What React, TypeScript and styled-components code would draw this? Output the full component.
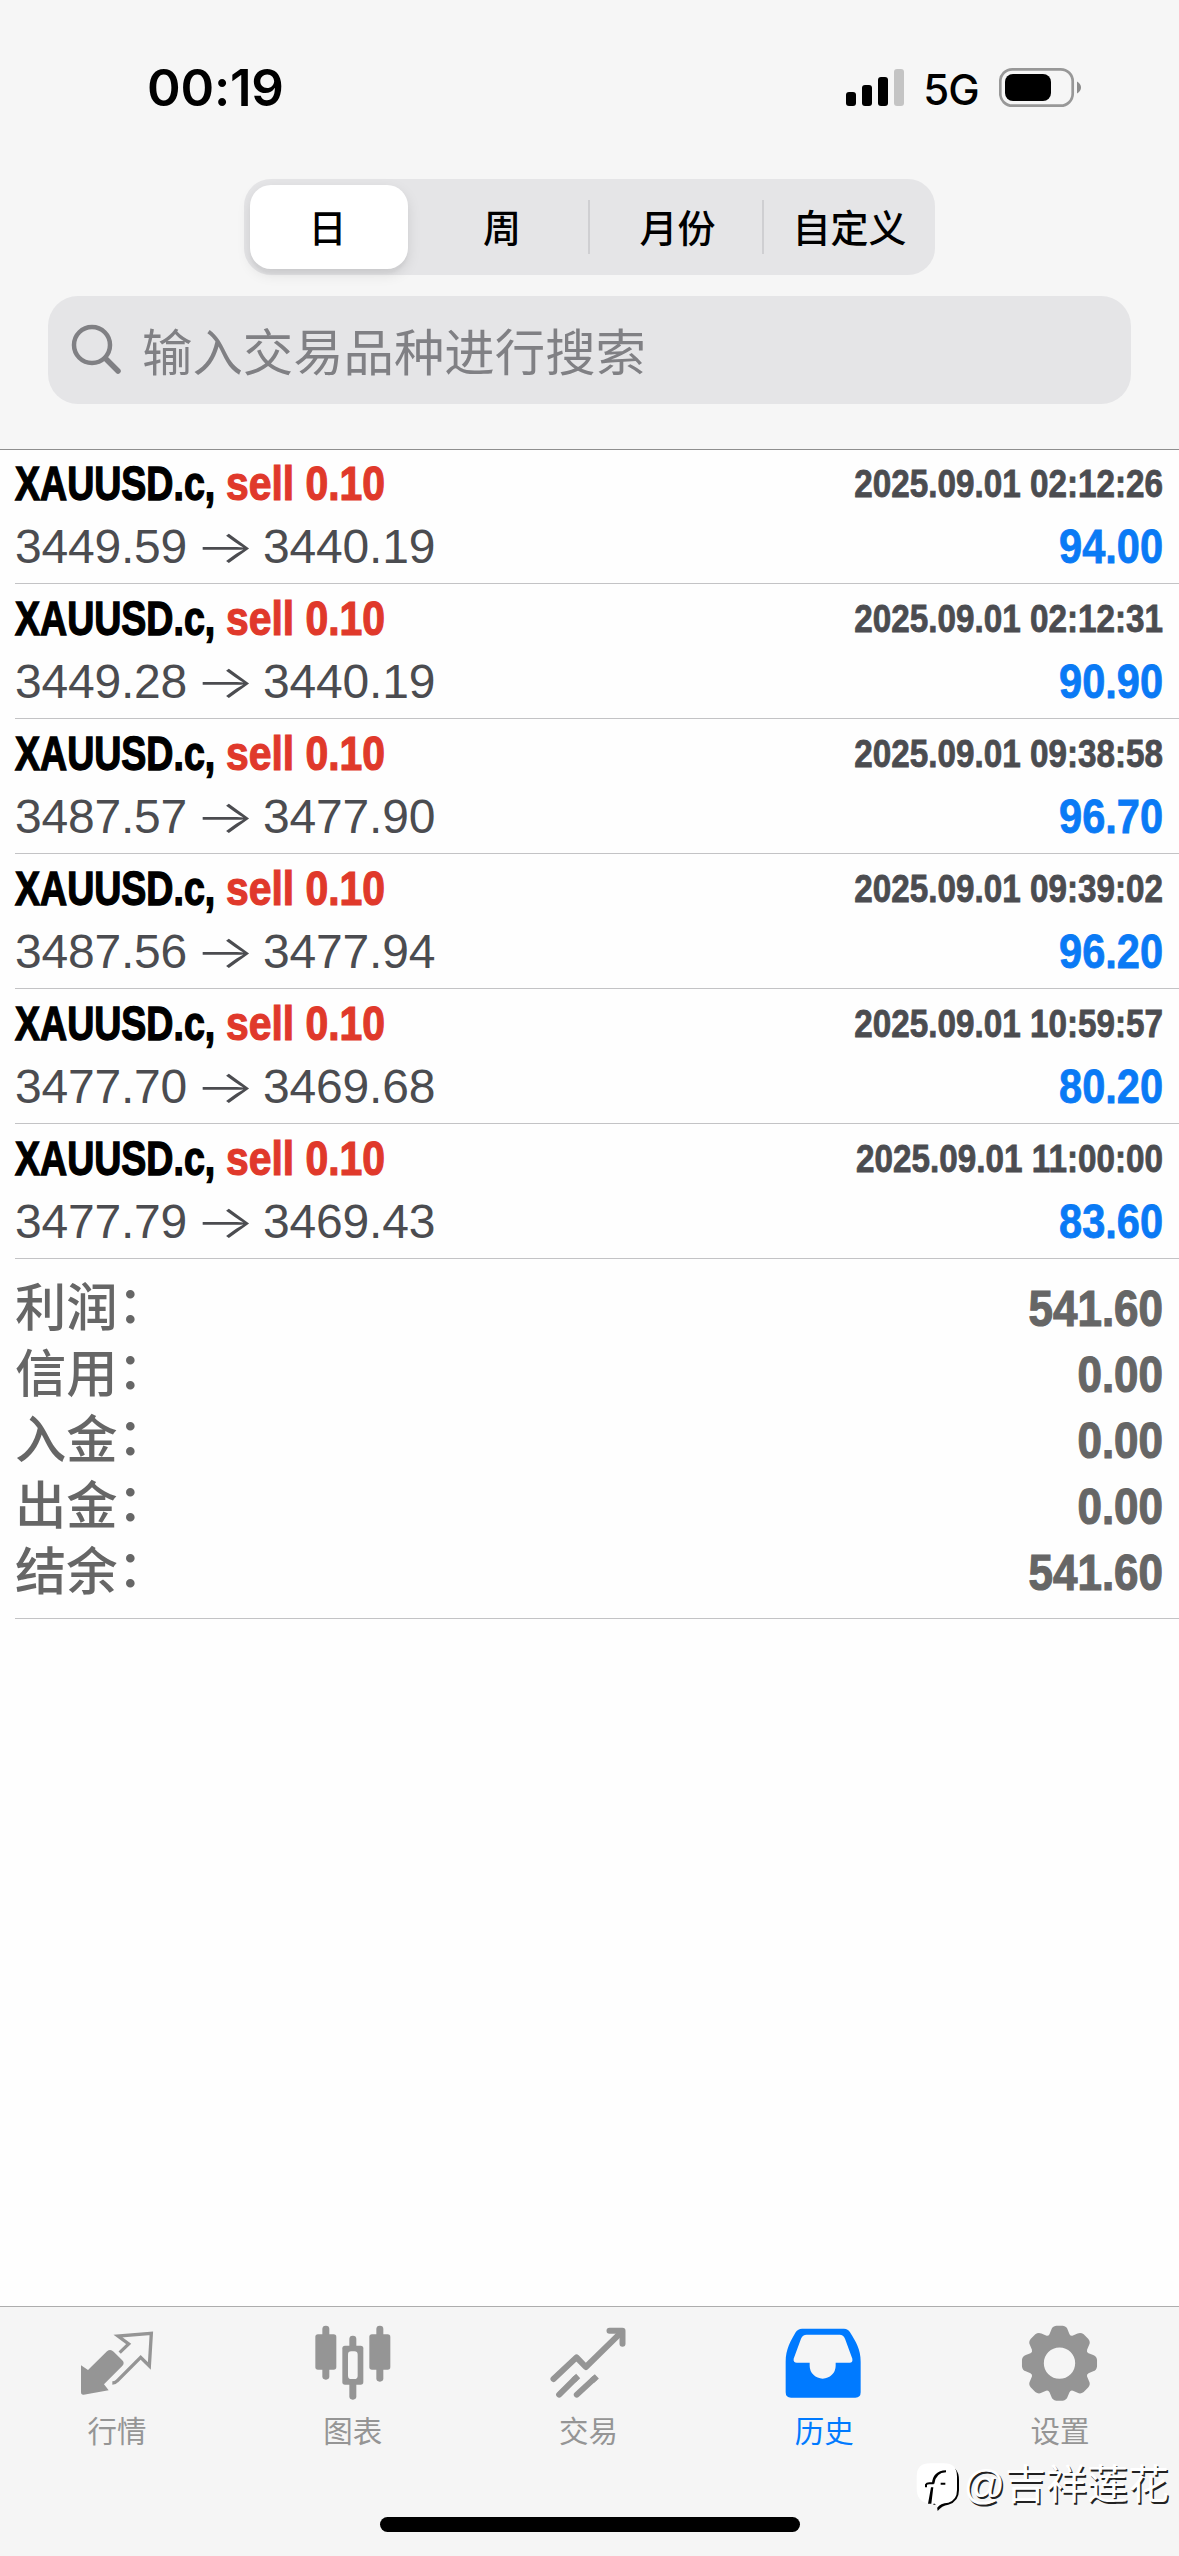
import React from "react";
import styled, { createGlobalStyle } from "styled-components";

const CJK = `"Liberation Sans", "Noto Sans CJK SC", sans-serif`;

const GlobalStyle = createGlobalStyle`
  * { box-sizing: border-box; }
  body { margin: 0; background: #fefefe; }
`;

const Screen = styled.div`
  width: 1179px;
  height: 2556px;
  display: flex;
  flex-direction: column;
  background: #fefefe;
  font-family: ${CJK};
  overflow: hidden;
`;

const Header = styled.header`
  height: 450px;
  flex: none;
  display: flex;
  flex-direction: column;
  background: #f6f6f6;
  border-bottom: 1px solid #8e8e8e;
`;

const StatusBar = styled.div`
  height: 179px;
  flex: none;
  padding: 58px 97px 0 147px;
  display: flex;
  align-items: flex-start;
  justify-content: space-between;
`;

const Clock = styled.div`
  font: 600 51px/60px Inter, sans-serif;
  letter-spacing: -0.2px;
  color: #000;
`;

const StatusIcons = styled.div`
  display: flex;
  align-items: flex-start;
`;

const Network = styled.div`
  width: 74px;
  margin: 0 11px 0 10px;
  text-align: center;
  font: 500 42px/63px Inter, sans-serif;
  letter-spacing: -1px;
`;

const Segments = styled.div`
  width: 691px;
  height: 96px;
  flex: none;
  margin: 0 0 0 244px;
  padding: 6px 0 6px 6px;
  display: flex;
  align-items: center;
  border-radius: 27px;
  background: #e5e5e7;
`;

const Segment = styled.div<{ $active?: boolean; $divided?: boolean; $w: number; $shift?: number }>`
  width: ${(p) => p.$w}px;
  height: ${(p) => (p.$active ? 84 : 54)}px;
  padding: 0 ${(p) => (p.$active ? 3 : 0)}px 4px ${(p) => p.$shift ?? 0}px;
  display: flex;
  align-items: center;
  justify-content: center;
  font-size: 38px;
  font-weight: 500;
  color: #000;
  border-radius: ${(p) => (p.$active ? 21 : 0)}px;
  background: ${(p) => (p.$active ? "#fff" : "transparent")};
  box-shadow: ${(p) => (p.$active ? "0 5px 14px rgba(0,0,0,.1), 0 5px 3px rgba(0,0,0,.03)" : "none")};
  border-right: ${(p) => (p.$divided ? "2px solid #cfcfd2" : "0")};
`;

const Search = styled.div`
  width: 1083px;
  height: 108px;
  flex: none;
  margin: 21px 0 0 48px;
  padding-left: 23px;
  display: flex;
  align-items: center;
  border-radius: 30px;
  background: #e5e5e7;
  color: #808084;
  font-size: 50.4px;
  svg { flex: none; margin-right: 19px; }
`;

const SearchHint = styled.span`
  padding-bottom: 2px;
`;

const Trades = styled.main`
  flex: 1;
  padding-left: 15px;
`;

const Trade = styled.article`
  height: 135px;
  padding-top: 1px;
  display: flex;
  flex-direction: column;
  border-bottom: 1px solid #c3c3c5;
  &:first-child { height: 134px; padding-top: 0; }
`;

const Line = styled.div<{ $h: number }>`
  height: ${(p) => p.$h}px;
  padding-right: 16px;
  display: flex;
  align-items: center;
  justify-content: space-between;
`;

const Title = styled.div`
  display: flex;
`;

const Condensed = styled.span<{ $w: number; $x: number; $size: number; $color: string; $right?: boolean; $heavy?: number }>`
  width: ${(p) => p.$w}px;
  display: flex;
  justify-content: ${(p) => (p.$right ? "flex-end" : "flex-start")};
  white-space: pre;
  font-family: "Liberation Sans", sans-serif;
  font-weight: 700;
  font-size: ${(p) => p.$size}px;
  line-height: 1;
  color: ${(p) => p.$color};
  -webkit-text-stroke: ${(p) => p.$heavy ?? 0.8}px ${(p) => p.$color};
  transform: scaleX(${(p) => p.$x});
  transform-origin: ${(p) => (p.$right ? "right" : "left")} center;
`;

const Prices = styled.div`
  display: flex;
  align-items: center;
  font-size: 48px;
  line-height: 1;
  letter-spacing: -0.2px;
  color: #4b4c50;
`;

const Arrow = styled.span`
  width: 76px;
  padding-bottom: 3px;
  display: flex;
  justify-content: center;
  font: 300 46px/48px Inter, sans-serif;
  transform: scaleX(1.38);
`;

const Summary = styled.section`
  height: 360px;
  padding-top: 15px;
  border-bottom: 1px solid #c3c3c5;
`;

const Label = styled.div`
  display: flex;
  padding-top: 3px;
  font-size: 51.3px;
  font-weight: 500;
  line-height: 60px;
  color: #666;
`;

const Colon = styled.span`
  line-height: 53px;
`;

const Total = styled.div`
  padding-top: 4px;
`;

const TabBar = styled.nav`
  height: 250px;
  flex: none;
  display: flex;
  flex-direction: column;
  border-top: 1px solid #adadad;
  background: #f5f5f5;
`;

const Tabs = styled.div`
  display: flex;
  height: 151px;
  flex: none;
`;

const Tab = styled.div<{ $active?: boolean }>`
  flex: 1;
  padding-top: 16px;
  display: flex;
  flex-direction: column;
  align-items: center;
  color: ${(p) => (p.$active ? "#007aff" : "#959595")};
`;

const TabIcon = styled.svg`
  width: 80px;
  height: 80px;
  flex: none;
  overflow: visible;
`;

const TabLabel = styled.div`
  margin-top: 7px;
  padding-right: 2px;
  font-size: 29.5px;
  line-height: 44px;
`;

const Watermark = styled.div`
  height: 54px;
  flex: none;
  padding-right: 10px;
  display: flex;
  align-items: center;
  justify-content: flex-end;
  font: 400 41px/54px "Liberation Sans", "Noto Sans CJK SC", sans-serif;
  color: #fff;
  text-shadow: 1.5px 1.5px 0.5px #222;
  svg { margin: 4px 1px 0 0; }
`;

const HomeIndicator = styled.div`
  width: 420px;
  height: 15px;
  margin: 5px auto 0;
  border-radius: 8px;
  background: #000;
`;

const trades = [
  ["3449.59", "3440.19", "2025.09.01 02:12:26", "94.00"],
  ["3449.28", "3440.19", "2025.09.01 02:12:31", "90.90"],
  ["3487.57", "3477.90", "2025.09.01 09:38:58", "96.70"],
  ["3487.56", "3477.94", "2025.09.01 09:39:02", "96.20"],
  ["3477.70", "3469.68", "2025.09.01 10:59:57", "80.20"],
  ["3477.79", "3469.43", "2025.09.01 11:00:00", "83.60"],
];

const totals = [
  ["利润", "541.60"],
  ["信用", "0.00"],
  ["入金", "0.00"],
  ["出金", "0.00"],
  ["结余", "541.60"],
];

const Signal = () => (
  <svg width="58" height="60" viewBox="846 58 58 60">
    <rect x="846" y="92" width="10" height="14" rx="3" />
    <rect x="862" y="85" width="10" height="21" rx="3" />
    <rect x="878" y="77" width="10" height="29" rx="3" />
    <rect x="894" y="69" width="10" height="37" rx="3" fill="#c4c4c4" />
  </svg>
);

const Battery = () => (
  <svg width="83" height="60" viewBox="999 58 83 60">
    <rect x="1000.3" y="69.3" width="72.4" height="36.4" rx="12" fill="none" stroke="#989898" strokeWidth="2.7" />
    <rect x="1005" y="74" width="46" height="27" rx="8" />
    <path d="M1077 81.500 Q1081 84 1081 87.500 Q1081 91 1077 93.500Z" fill="#8c8c8c" />
  </svg>
);

const SearchIcon = () => (
  <svg width="52" height="52" viewBox="0 0 52 52" fill="none" stroke="#808084" strokeWidth="4.5" strokeLinecap="round">
    <circle cx="21" cy="21" r="18" />
    <path d="M34.500 34.500 47 47" strokeWidth="5.5" />
  </svg>
);

const QuotesIcon = () => (
  <TabIcon viewBox="114 100 240 240" fill="currentColor">
    <path d="M123 227 144 241 201 185Q211 176 221 186L246 211Q256 220 246 230L192 284 206 302 131 315Q123 316 123 307Z" />
    <path d="M239 189 266 163 234 139 334 131 328 229 302 203 231 274Q226 280 217 280" fill="none" stroke="currentColor" strokeWidth="10" />
  </TabIcon>
);

const ChartIcon = () => (
  <TabIcon viewBox="821 100 240 240" fill="currentColor">
    <rect x="846" y="108" width="21" height="162" rx="10" />
    <rect x="825" y="134" width="63" height="106" rx="8" />
    <rect x="1008" y="108" width="21" height="168" rx="10" />
    <rect x="987" y="134" width="63" height="106" rx="8" />
    <rect x="927" y="138" width="21" height="192" rx="10" />
    <rect x="906" y="168" width="63" height="117" rx="8" />
    <rect x="923" y="185" width="29" height="83" rx="10" fill="#f5f5f5" />
  </TabIcon>
);

const TradeIcon = () => (
  <TabIcon viewBox="148.5 100 240 240" fill="none" stroke="currentColor" strokeWidth="18" strokeLinecap="round">
    <path d="M162 268 231 203 259 232 365 128" strokeLinejoin="round" />
    <path d="M330 123H369V162" strokeLinejoin="round" />
    <path d="M179 315 228 266M232 315 284 267" />
    <path d="M222 272 236 259M278 273 292 260" strokeLinecap="butt" />
  </TabIcon>
);

const HistoryIcon = () => (
  <TabIcon viewBox="856 100 240 240" fill="currentColor">
    <path
      fillRule="evenodd"
      d="M907 117H1033Q1045 117 1051 128C1069 157 1083 180 1083 216V308Q1083 324 1067 324H874Q858 324 858 308V216C858 180 873 153 888 128Q895 117 907 117ZM921 135Q909 135 904 147L882 207Q880 219 892 219H930V228A38 38 0 0 0 1008 228V219H1050Q1060 219 1058 207L1036 147Q1031 135 1020 135Z"
    />
  </TabIcon>
);

const gearPath = (() => {
  const pts: string[] = [];
  const at = (r: number, deg: number) => {
    const a = (deg * Math.PI) / 180;
    return `${(538.5 + r * Math.cos(a)).toFixed(1)} ${(220.5 + r * Math.sin(a)).toFixed(1)}`;
  };
  for (let i = 0; i < 8; i++) {
    const c = i * 45 - 90;
    pts.push(`${i ? "L" : "M"}${at(92, c - 19)}L${at(104, c - 13.500)}Q${at(113, c - 11)} ${at(113, c - 5)}L${at(113, c + 5)}Q${at(113, c + 11)} ${at(104, c + 13.500)}L${at(92, c + 19)}Q${at(87, c + 22.500)} ${at(92, c + 26)}`);
  }
  return pts.join("") + "Z";
})();

const SettingsIcon = () => (
  <TabIcon viewBox="423 100 240 240" fill="currentColor">
    <path fillRule="evenodd" d={`${gearPath}M585.500 220.500A47 47 0 1 0 491.500 220.500A47 47 0 1 0 585.500 220.500Z`} />
  </TabIcon>
);

const WatermarkLogo = () => (
  <svg width="46" height="50" viewBox="108 536 138 150">
    <path d="M175 546H197Q237 548 237 590V620Q237 655 205 664Q185 667 173 683L170 664H160L165 600Z" fill="#000" />
    <path d="M150 540H192Q231 540 231 580V620Q231 650 205 658Q180 660 172 673L165 661H150Q110 658 110 615V580Q110 540 150 540Z" fill="#fff" />
    <path d="M144 661H154L160 612H153ZM156 601Q158 563 198 561V567Q168 568 163 601Z" fill="#000" />
    <path d="M138 612V604Q140 600 148 600H161M182 601H196" fill="none" stroke="#000" strokeWidth="6" />
  </svg>
);

export default function App() {
  return (
    <Screen>
      <GlobalStyle />
      <Header>
        <StatusBar>
          <Clock>00:19</Clock>
          <StatusIcons>
            <Signal />
            <Network>5G</Network>
            <Battery />
          </StatusIcons>
        </StatusBar>
        <Segments>
          <Segment $active $w={158}>日</Segment>
          <Segment $w={182} $divided $shift={8}>周</Segment>
          <Segment $w={174} $divided $shift={3}>月份</Segment>
          <Segment $w={171}>自定义</Segment>
        </Segments>
        <Search>
          <SearchIcon />
          <SearchHint>输入交易品种进行搜索</SearchHint>
        </Search>
      </Header>
      <Trades>
        {trades.map(([open, close, time, profit]) => (
          <Trade key={time}>
            <Line $h={68}>
              <Title>
                <Condensed $w={211} $x={0.79} $size={47.5} $color="#000" $heavy={1.4}>XAUUSD.c,</Condensed>
                <Condensed $w={170} $x={0.86} $size={47.5} $color="#e0392b" $heavy={1.2}>sell 0.10</Condensed>
              </Title>
              <Condensed $right $w={310} $x={0.875} $size={38} $color="#4b4c50">{time}</Condensed>
            </Line>
            <Line $h={58}>
              <Prices>
                {open}
                <Arrow>→</Arrow>
                {close}
              </Prices>
              <Condensed $right $w={110} $x={0.865} $size={48} $color="#0a7af5">{profit}</Condensed>
            </Line>
          </Trade>
        ))}
        <Summary>
          {totals.map(([label, value]) => (
            <Line $h={66} key={label}>
              <Label>{label}<Colon>：</Colon></Label>
              <Total>
                <Condensed $right $w={160} $x={0.87} $size={50.5} $color="#666" $heavy={1.2}>{value}</Condensed>
              </Total>
            </Line>
          ))}
        </Summary>
      </Trades>
      <TabBar>
        <Tabs>
          <Tab><QuotesIcon /><TabLabel>行情</TabLabel></Tab>
          <Tab><ChartIcon /><TabLabel>图表</TabLabel></Tab>
          <Tab><TradeIcon /><TabLabel>交易</TabLabel></Tab>
          <Tab $active><HistoryIcon /><TabLabel>历史</TabLabel></Tab>
          <Tab><SettingsIcon /><TabLabel>设置</TabLabel></Tab>
        </Tabs>
        <Watermark>
          <WatermarkLogo />
          @吉祥莲花
        </Watermark>
        <HomeIndicator />
      </TabBar>
    </Screen>
  );
}
